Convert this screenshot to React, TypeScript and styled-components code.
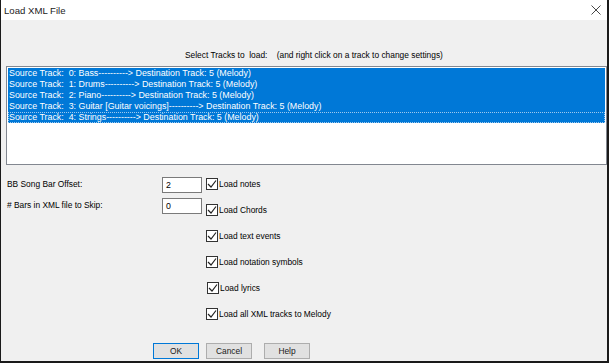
import React from "react";
import styled, { createGlobalStyle } from "styled-components";

const GlobalStyle = createGlobalStyle`
  html, body {
    margin: 0;
    padding: 0;
    background: #ffffff;
  }
  * {
    box-sizing: border-box;
  }
`;

const Window = styled.div`
  width: 609px;
  height: 363px;
  display: flex;
  flex-direction: column;
  background: #f0f0f0;
  border-left: 1px solid #1a1a1a;
  border-right: 2px solid #1a1a1a;
  border-bottom: 2px solid #1a1a1a;
  font-family: "Liberation Sans", Arial, sans-serif;
  font-size: 8.4px;
  color: #000;
  overflow: hidden;
`;

const TitleBar = styled.div`
  height: 20px;
  background: #ffffff;
  display: flex;
  align-items: center;
  justify-content: space-between;
  padding: 0 6px 0 3px;
  font-size: 9.6px;
  color: #1b1b1b;
`;

const Body = styled.div`
  flex: 1;
  display: flex;
  flex-direction: column;
  padding-top: 30px;
`;

const Header = styled.div`
  height: 11px;
  line-height: 11px;
  padding-left: 184px;
  white-space: pre;
  margin-bottom: 5px;
`;

const ListBox = styled.div`
  margin-left: 5px;
  width: 601px;
  height: 99px;
  background: #ffffff;
  border: 1px solid #828790;
  padding: 1px 1px 0 1px;
  font-size: 8.9px;
`;

const ListRow = styled.div<{ $focus?: boolean }>`
  height: 11px;
  line-height: 11px;
  background: #0078d7;
  color: #ffffff;
  padding-left: 1px;
  white-space: pre;
  outline: ${p => (p.$focus ? "1px dotted #9ec9ee" : "none")};
  outline-offset: -1px;
`;

const Form = styled.div`
  display: flex;
  margin-top: 6px;
  padding-left: 5px;
`;

const LeftColumn = styled.div`
  width: 200px;
  display: flex;
  flex-direction: column;
  gap: 5px;
  padding-top: 6px;
`;

const FieldRow = styled.div`
  display: flex;
  align-items: center;
  height: 16px;
`;

const FieldLabel = styled.div`
  width: 156px;
  padding-left: 1px;
  margin-top: -3px;
`;

const FieldInput = styled.div`
  width: 40px;
  height: 16px;
  background: #ffffff;
  border: 1px solid #7a7a7a;
  line-height: 14px;
  padding-left: 3px;
  font-size: 8.8px;
`;

const CheckColumn = styled.div`
  display: flex;
  flex-direction: column;
`;

const CheckRow = styled.div<{ $shift?: number }>`
  height: 26px;
  display: flex;
  align-items: center;
  padding-left: ${p => p.$shift ?? 0}px;
`;

const CheckBox = styled.div`
  width: 12px;
  height: 12px;
  border: 1px solid #333333;
  background: #ffffff;
  display: flex;
  align-items: center;
  justify-content: center;
  margin-right: 1px;
`;

const ButtonRow = styled.div`
  display: flex;
  padding-left: 152px;
  margin-top: 16px;
`;

const Button = styled.div<{ $default?: boolean; $gap?: number }>`
  width: 46px;
  height: 16px;
  margin-left: ${p => p.$gap ?? 0}px;
  background: #e1e1e1;
  border: 1px solid ${p => (p.$default ? "#0078d7" : "#adadad")};
  display: flex;
  align-items: center;
  justify-content: center;
  color: #1a1a1a;
`;

const tracks = [
  "Source Track:  0: Bass----------> Destination Track: 5 (Melody)",
  "Source Track:  1: Drums----------> Destination Track: 5 (Melody)",
  "Source Track:  2: Piano----------> Destination Track: 5 (Melody)",
  "Source Track:  3: Guitar [Guitar voicings]----------> Destination Track: 5 (Melody)",
  "Source Track:  4: Strings----------> Destination Track: 5 (Melody)",
];

const options = [
  { label: "Load notes", shift: 0 },
  { label: "Load Chords", shift: 0 },
  { label: "Load text events", shift: 0 },
  { label: "Load notation symbols", shift: 0 },
  { label: "Load lyrics", shift: 1 },
  { label: "Load all XML tracks to Melody", shift: 0 },
];

const Check = () => (
  <svg width="10" height="10" viewBox="0 0 10 10">
    <path d="M1 5 L4 8 L9 1.5" fill="none" stroke="#222" strokeWidth="1.2" />
  </svg>
);

const CloseIcon = () => (
  <svg width="10" height="10" viewBox="0 0 10 10">
    <path d="M0.5 0.5 L9.5 9.5 M9.5 0.5 L0.5 9.5" stroke="#333" strokeWidth="0.9" />
  </svg>
);

export default function App() {
  return (
    <>
      <GlobalStyle />
      <Window>
        <TitleBar>
          <span>Load XML File</span>
          <CloseIcon />
        </TitleBar>
        <Body>
          <Header>{"Select Tracks to  load:    (and right click on a track to change settings)"}</Header>
          <ListBox>
            {tracks.map((t, i) => (
              <ListRow key={i} $focus={i === tracks.length - 1}>
                {t}
              </ListRow>
            ))}
          </ListBox>
          <Form>
            <LeftColumn>
              <FieldRow>
                <FieldLabel>BB Song Bar Offset:</FieldLabel>
                <FieldInput>2</FieldInput>
              </FieldRow>
              <FieldRow>
                <FieldLabel># Bars in XML file to Skip:</FieldLabel>
                <FieldInput>0</FieldInput>
              </FieldRow>
            </LeftColumn>
            <CheckColumn>
              {options.map(o => (
                <CheckRow key={o.label} $shift={o.shift}>
                  <CheckBox>
                    <Check />
                  </CheckBox>
                  {o.label}
                </CheckRow>
              ))}
            </CheckColumn>
          </Form>
          <ButtonRow>
            <Button $default>OK</Button>
            <Button $gap={7}>Cancel</Button>
            <Button $gap={12}>Help</Button>
          </ButtonRow>
        </Body>
      </Window>
    </>
  );
}
